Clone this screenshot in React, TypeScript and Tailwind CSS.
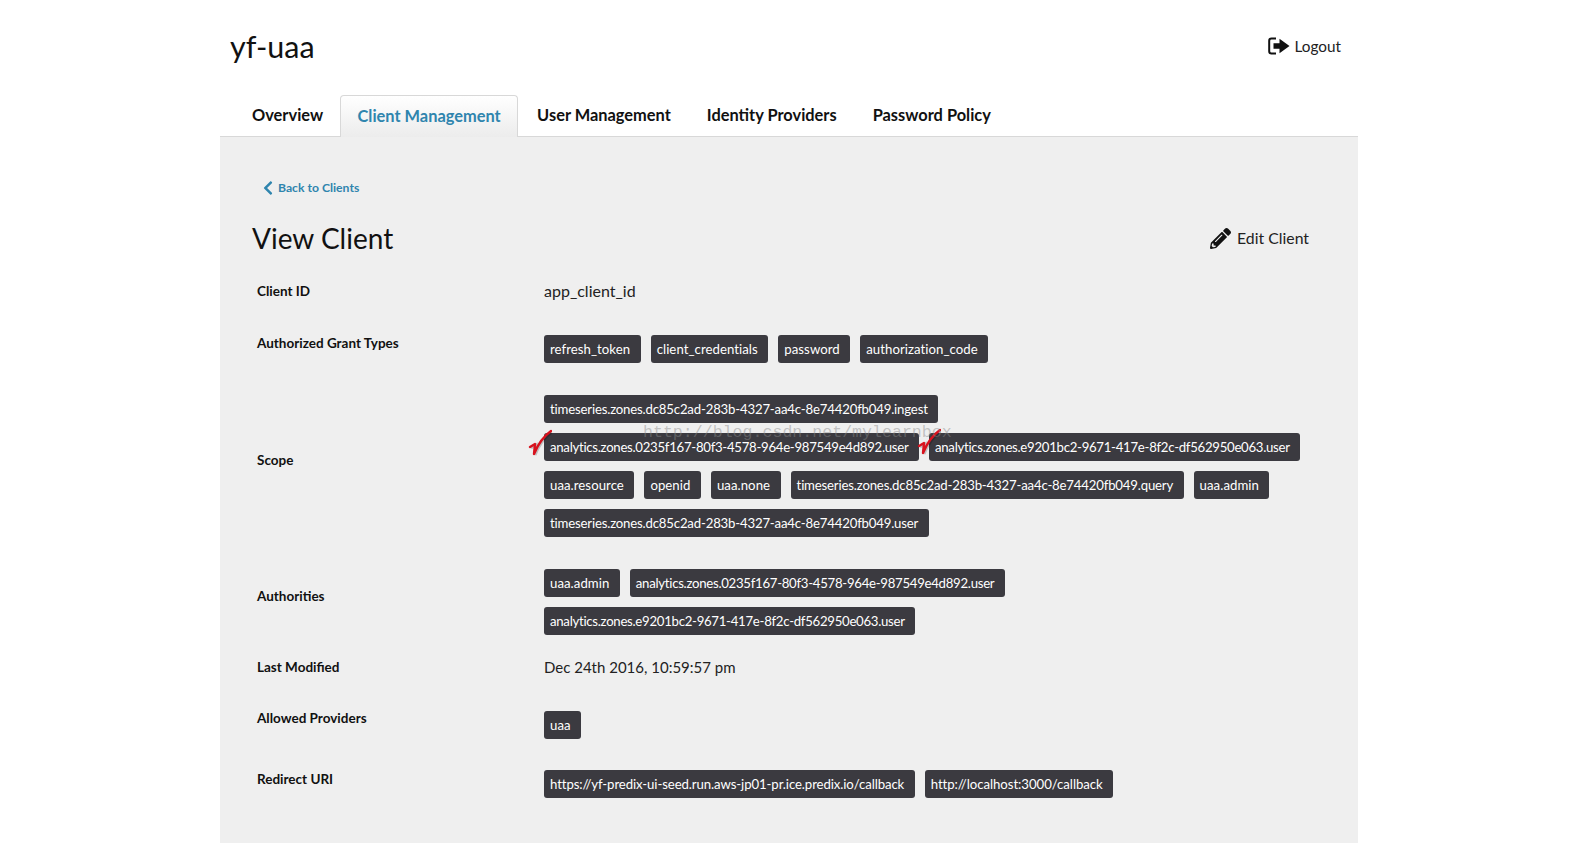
import { FaChevronLeft, FaPencilAlt } from "react-icons/fa";

function Tag({ children, className }: { children: React.ReactNode; className?: string }) {
  return (
    <span className={`mr-[10px] mb-[10px] inline-flex h-[28px] items-center rounded-[3px] bg-[#3b3a40] pt-[1px] pr-[10.5px] pl-[6px] text-[13.2px] whitespace-nowrap text-white ${className ?? "tracking-[0.05px]"}`}>
      {children}
    </span>
  );
}

// the uuid scopes run a little tighter than the plain names
const timeseries = "tracking-[-0.18px]";
const analytics = "tracking-[-0.28px]";

function Row({ label, className, labelClassName, children }: { label: string; className?: string; labelClassName?: string; children: React.ReactNode }) {
  return (
    <div className={`flex ${className ?? ""}`}>
      <div className={`w-[287px] shrink-0 text-[13.5px] leading-[20px] font-bold text-[#111] ${labelClassName ?? ""}`}>{label}</div>
      <div className="flex flex-1 flex-wrap">{children}</div>
    </div>
  );
}

function Check({ className }: { className: string }) {
  return (
    <svg className={`absolute ${className}`} width="24" height="30" viewBox="0 0 24 30" fill="none">
      <path d="M2 18 L7 15 L6 25 C10 15 16 7 23 2" stroke="#000" strokeOpacity="0.2" strokeWidth="3" fill="none" transform="translate(1,1)" />
      <path d="M2 18 L7 15 L6 25 C10 15 16 7 23 2" stroke="#d8121e" strokeWidth="2.4" fill="none" strokeLinecap="round" strokeLinejoin="round" />
    </svg>
  );
}

export default function App() {
  return (
    <div className="min-h-[843px] bg-white font-['Lato',sans-serif]">
      <div className="ml-[220px] w-[1138px]">
        <header className="flex h-[95px] items-start justify-between pr-[17px] pl-[10px]">
          <h1 className="mt-[23px] text-[30.5px] leading-[46px] text-[#111]">yf-uaa</h1>
          <a className="mt-[35px] flex items-center gap-[5px] text-[15.3px] leading-[22px] text-[#222]">
            <svg width="22" height="18" viewBox="0 0 22 18" fill="none">
              <path d="M8 1.5H3.5C2.2 1.5 1.2 2.5 1.2 3.8V14.2C1.2 15.5 2.2 16.5 3.5 16.5H8" stroke="#111" strokeWidth="2" />
              <path d="M5.5 6.2H11.5V1.8L21.5 9L11.5 16.2V11.8H5.5Z" fill="#111" />
            </svg>
            Logout
          </a>
        </header>

        <nav className="flex h-[42px] items-end border-b border-[#d8d8d8] pl-[15px] text-[16.4px] font-bold text-[#111]">
          <a className="flex h-[41px] items-center px-[17px] pb-[1px]">Overview</a>
          <a className="-mb-px flex h-[42px] w-[178px] items-center justify-center rounded-t-[4px] border border-b-0 border-[#d8d8d8] bg-gradient-to-b from-white to-[#ececec] pb-[1px] text-[#2f85ae]">
            Client Management
          </a>
          <a className="ml-[2px] flex h-[41px] items-center px-[17px] pb-[1px]">User Management</a>
          <a className="ml-[1px] flex h-[41px] items-center px-[18px] pb-[1px]">Identity Providers</a>
          <a className="flex h-[41px] items-center px-[18px] pb-[1px]">Password Policy</a>
        </nav>

        <main className="relative min-h-[706px] bg-[#efefef] pr-[20px] pl-[37px]">
          <a className="flex items-center pt-[41px] pl-[4px] text-[12.2px] leading-[20px] font-bold text-[#2f85ae]">
            <FaChevronLeft className="mr-[3px] h-[16px] w-[14px]" />
            Back to Clients
          </a>

          <div className="mt-[15px] mr-[29px] flex items-center justify-between">
            <h2 className="-ml-[5px] text-[28px] leading-[50px] text-[#111]">View Client</h2>
            <a className="flex items-center gap-[6px] text-[15.8px] text-[#222]">
              <FaPencilAlt className="h-[21px] w-[21px] text-[#111]" />
              Edit Client
            </a>
          </div>

          <div className="mt-[18px]">
            <Row label="Client ID" className="h-[45px]">
              <span className="text-[16px] leading-[20px] text-[#222]">app_client_id</span>
            </Row>
            <Row label="Authorized Grant Types" className="mt-[9px]" labelClassName="-mt-[2px]">
              <Tag>refresh_token</Tag>
              <Tag>client_credentials</Tag>
              <Tag>password</Tag>
              <Tag>authorization_code</Tag>
            </Row>
            <Row label="Scope" className="relative mt-[22px] items-center" labelClassName="pb-[22px]">
              <Tag className={timeseries}>timeseries.zones.dc85c2ad-283b-4327-aa4c-8e74420fb049.ingest</Tag>
              <div className="w-full" />
              <Tag className={analytics}>analytics.zones.0235f167-80f3-4578-964e-987549e4d892.user</Tag>
              <Tag className={analytics}>analytics.zones.e9201bc2-9671-417e-8f2c-df562950e063.user</Tag>
              <Tag>uaa.resource</Tag>
              <Tag>openid</Tag>
              <Tag>uaa.none</Tag>
              <Tag className={timeseries}>timeseries.zones.dc85c2ad-283b-4327-aa4c-8e74420fb049.query</Tag>
              <Tag>uaa.admin</Tag>
              <Tag className={timeseries}>timeseries.zones.dc85c2ad-283b-4327-aa4c-8e74420fb049.user</Tag>
              <Check className="top-[34px] left-[271px]" />
              <Check className="top-[33px] left-[660px]" />
              <span className="pointer-events-none absolute top-[28px] left-[386px] font-['Liberation_Mono',monospace] text-[16.6px] leading-[20px] whitespace-nowrap text-[#8a8a8a]/45">
                http://blog.csdn.net/mylearnbox
              </span>
            </Row>
            <Row label="Authorities" className="mt-[22px] items-center" labelClassName="pb-[22px]">
              <Tag>uaa.admin</Tag>
              <Tag className={analytics}>analytics.zones.0235f167-80f3-4578-964e-987549e4d892.user</Tag>
              <Tag className={analytics}>analytics.zones.e9201bc2-9671-417e-8f2c-df562950e063.user</Tag>
            </Row>
            <Row label="Last Modified" className="mt-[3px] h-[42px]" labelClassName="mt-[9px]">
              <span className="mt-[9px] text-[15px] leading-[20px] text-[#222]">Dec 24th 2016, 10:59:57 pm</span>
            </Row>
            <Row label="Allowed Providers" className="mt-[21px]" labelClassName="-mt-[3px]">
              <Tag>uaa</Tag>
            </Row>
            <Row label="Redirect URI" className="mt-[21px]" labelClassName="-mt-[1px]">
              <Tag className="tracking-[-0.1px]">https://yf-predix-ui-seed.run.aws-jp01-pr.ice.predix.io/callback</Tag>
              <Tag className="tracking-[-0.05px]">http://localhost:3000/callback</Tag>
            </Row>
          </div>
        </main>
      </div>
    </div>
  );
}
